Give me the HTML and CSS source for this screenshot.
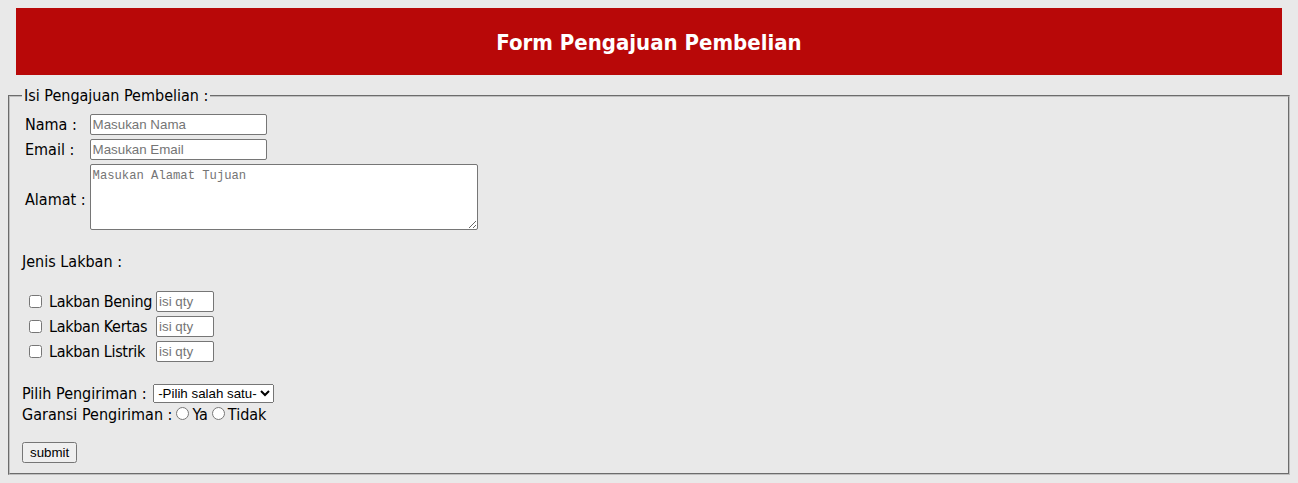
FILE: index.html
```html
<!DOCTYPE html>
<html lang="id">
<head>
<meta charset="utf-8">
<title>Form Pengajuan Pembelian</title>
<link rel="stylesheet" href="styles.css">
</head>
<body>
<div class="header"><h1 class="title">Form Pengajuan Pembelian</h1></div>
<form class="form">
  <fieldset class="box">
    <legend class="legend">Isi Pengajuan Pembelian :</legend>
    <table class="identity">
      <tr><td class="label">Nama :</td><td><input type="text" class="text-input" placeholder="Masukan Nama"></td></tr>
      <tr><td class="label">Email :</td><td><input type="text" class="text-input" placeholder="Masukan Email"></td></tr>
      <tr><td class="label label-tall">Alamat :</td><td><textarea class="address" placeholder="Masukan Alamat Tujuan"></textarea></td></tr>
    </table>
    <p class="section-title">Jenis Lakban :</p>
    <table class="products">
      <tr><td><input type="checkbox" class="check"></td><td class="label product-name">Lakban Bening</td><td><input type="text" class="qty" placeholder="isi qty"></td></tr>
      <tr><td><input type="checkbox" class="check"></td><td class="label product-name">Lakban Kertas</td><td><input type="text" class="qty" placeholder="isi qty"></td></tr>
      <tr><td><input type="checkbox" class="check"></td><td class="label product-name">Lakban Listrik</td><td><input type="text" class="qty" placeholder="isi qty"></td></tr>
    </table>
    <div class="shipping">
      <div class="line">Pilih Pengiriman : <select class="select"><option>-Pilih salah satu-</option><option>JNE</option><option>J&amp;T</option></select></div>
      <div class="line">Garansi Pengiriman :<input type="radio" name="garansi" class="radio">Ya<input type="radio" name="garansi" class="radio">Tidak</div>
    </div>
    <div class="actions"><button type="submit" class="submit">submit</button></div>
  </fieldset>
</form>
</body>
</html>
```

FILE: styles.css
```css
html, body {
  background: #e9e9e9;
}
body {
  margin: 8px;
  font-family: "DejaVu Sans Condensed", "DejaVu Sans", sans-serif;
  font-size: 16px;
  line-height: 19px;
  color: #000;
}
.header {
  margin: 0 8px;
  height: 67px;
  background: #b80808;
  display: flex;
  align-items: center;
  justify-content: center;
}
.title {
  margin: 0;
  color: #fff;
  font-size: 22px;
  font-weight: bold;
  line-height: 28px;
  padding-top: 2px;
}
.form {
  margin: 0;
}
.box {
  margin: 11px 0 0;
  padding: 5.6px 12px 10px;
  border: 2px groove #c0c0c0;
  min-width: 0;
}
.legend {
  padding: 0 2px;
}
.identity, .products {
  border-spacing: 2px;
}
.identity td, .products td {
  padding: 1px;
}
.label {
  white-space: nowrap;
}
.product-name {
  letter-spacing: -0.3px;
}
.label-tall {
  padding-top: 6px !important;
}
.text-input, .qty, .address {
  display: block;
  box-sizing: border-box;
  border: 1px solid #767676;
  border-radius: 2px;
  background: #fff;
  padding: 1px 2px;
  margin: 0;
  font-family: "Liberation Sans", Arial, sans-serif;
  font-size: 13.33px;
  color: #000;
}
.text-input {
  width: 177px;
  height: 21px;
}
.qty {
  width: 58px;
  height: 21px;
}
.address {
  width: 388px;
  height: 66px;
  padding: 4px 2px 2px;
  font-family: "Liberation Mono", "DejaVu Sans Mono", monospace;
  font-size: 12.2px;
  line-height: 15px;
}
::placeholder {
  color: #757575;
}
.section-title {
  margin: 19px 0 17px;
}
.check {
  display: block;
  width: 13px;
  height: 13px;
  margin: 3px 3px 3px 4px;
}
.shipping {
  margin-top: 19px;
}
.line {
  line-height: 20px;
  height: 20px;
}
.select {
  font-family: "Liberation Sans", Arial, sans-serif;
  font-size: 13.33px;
  color: #000;
  vertical-align: 1px;
  margin-left: 2px;
}
.radio {
  width: 13px;
  height: 13px;
  margin: 3px 3px 0 4px;
}
.actions {
  display: flex;
  margin-top: 18px;
}
.submit {
  font-family: "Liberation Sans", Arial, sans-serif;
  font-size: 13.33px;
  color: #000;
  margin: 0;
}
```
